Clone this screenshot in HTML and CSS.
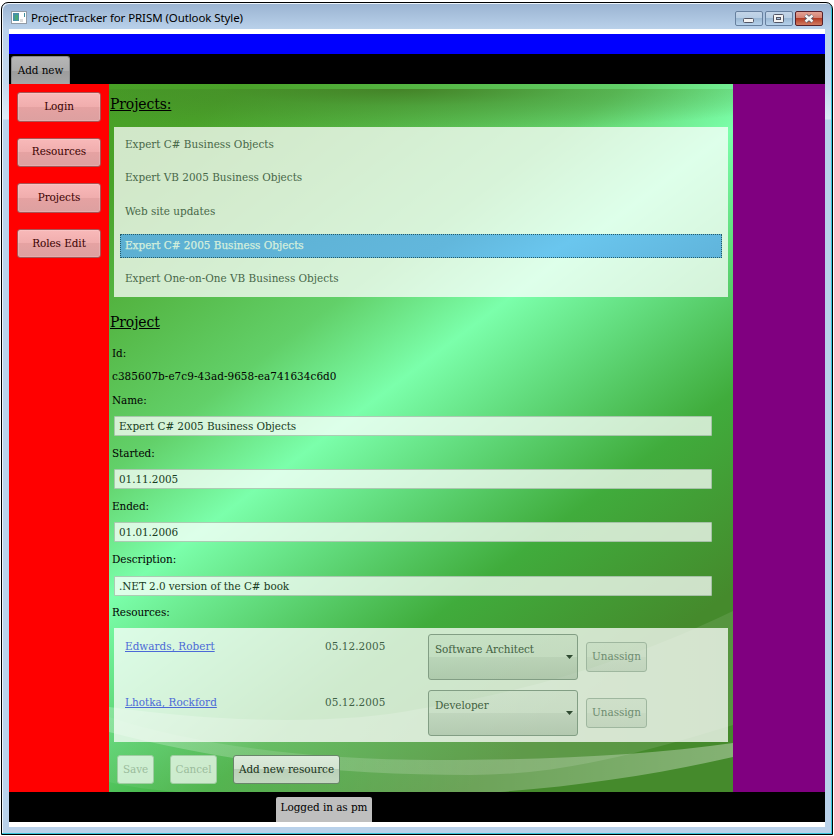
FILE: index.html
```html
<!DOCTYPE html>
<html lang="en">
<head>
<meta charset="utf-8">
<title>ProjectTracker for PRISM (Outlook Style)</title>
<link rel="stylesheet" href="styles.css">
</head>
<body>
<div class="window">
  <header class="titlebar">
    <svg class="app-icon" width="16" height="14" viewBox="0 0 16 14"><rect x=".5" y=".5" width="15" height="12" fill="#fff" stroke="#929ba6"/><rect x="2" y="2" width="6" height="8" fill="#4a91a7"/><rect x="4" y="4" width="3" height="5" fill="#48a978"/><rect x="9" y="8" width="3" height="3" fill="#ddd"/><rect x="13" y="2" width="1" height="4" fill="#3d8fa0"/></svg>
    <span class="caption">ProjectTracker for PRISM (Outlook Style)</span>
    <svg class="controls" width="88" height="15" viewBox="0 0 88 15">
      <defs>
        <linearGradient id="glass" x2="0" y2="1"><stop offset="0" stop-color="#c4d5e8"/><stop offset=".48" stop-color="#b7cde3"/><stop offset=".5" stop-color="#9bb8d4"/><stop offset="1" stop-color="#b8d3ec"/></linearGradient>
        <linearGradient id="danger" x2="0" y2="1"><stop offset="0" stop-color="#e5a598"/><stop offset=".48" stop-color="#d27f70"/><stop offset=".5" stop-color="#b43c25"/><stop offset="1" stop-color="#d38066"/></linearGradient>
      </defs>
      <rect x=".5" y=".5" width="27" height="14" rx="1.5" fill="url(#glass)" stroke="#67809f"/>
      <rect x="8.5" y="7.5" width="10" height="4" rx="1" fill="#f3f3f3" stroke="#535666"/>
      <rect x="30.500" y=".5" width="27" height="14" rx="1.5" fill="url(#glass)" stroke="#67809f"/>
      <rect x="38.500" y="3.500" width="10" height="8" rx="1" fill="#f3f3f3" stroke="#535666"/>
      <rect x="41.500" y="6.500" width="4" height="2" fill="#a9c3df" stroke="#535666"/>
      <rect x="60.500" y=".5" width="27" height="14" rx="1.500" fill="url(#danger)" stroke="#56202a"/>
      <path d="M70.500 4.500l7 6M77.500 4.500l-7 6" stroke="#535666" stroke-width="4.200"/>
      <path d="M70.500 4.500l7 6M77.500 4.500l-7 6" stroke="#f6f6f6" stroke-width="2.400"/>
    </svg>
  </header>
  <div class="client">
    <div class="banner"></div>
    <nav class="toolbar"><button class="tab">Add new</button></nav>
    <div class="workspace">
      <aside class="menu">
        <button class="menu-btn">Login</button>
        <button class="menu-btn">Resources</button>
        <button class="menu-btn">Projects</button>
        <button class="menu-btn">Roles Edit</button>
      </aside>
      <main class="view">
        <svg class="waves" width="624" height="708" viewBox="0 0 624 708">
          <defs>
            <linearGradient id="wa"><stop offset="0" stop-color="#fff" stop-opacity=".24"/><stop offset="1" stop-color="#fff" stop-opacity=".09"/></linearGradient>
            <linearGradient id="wb"><stop offset="0" stop-color="#fff" stop-opacity=".06"/><stop offset=".5" stop-color="#fff" stop-opacity=".19"/><stop offset="1" stop-color="#fff" stop-opacity=".34"/></linearGradient>
          </defs>
          <path fill="url(#wa)" d="M0 623C130 641 240 639 310 625C430 606 530 572 624 527V641C520 673 445 691 361 691C250 691 130 682 0 648Z"/>
          <path fill="url(#wb)" d="M0 633C80 660 200 676 325 676C440 676 540 671 624 659V673C550 690 470 702 391 708H68C45 706 20 703 0 698Z"/>
        </svg>
        <div class="content">
          <h2 class="heading list-heading">Projects:</h2>
          <ul class="project-list">
            <li>Expert C# Business Objects</li>
            <li>Expert VB 2005 Business Objects</li>
            <li>Web site updates</li>
            <li class="selected">Expert C# 2005 Business Objects</li>
            <li>Expert One-on-One VB Business Objects</li>
          </ul>
          <h2 class="heading detail-heading">Project</h2>
          <div class="label">Id:</div>
          <div class="label guid">c385607b-e7c9-43ad-9658-ea741634c6d0</div>
          <div class="label">Name:</div>
          <div class="field">Expert C# 2005 Business Objects</div>
          <div class="label">Started:</div>
          <div class="field">01.11.2005</div>
          <div class="label">Ended:</div>
          <div class="field">01.01.2006</div>
          <div class="label">Description:</div>
          <div class="field">.NET 2.0 version of the C# book</div>
          <div class="label">Resources:</div>
          <div class="resources">
            <div class="resource">
              <a class="person">Edwards, Robert</a><span class="date">05.12.2005</span>
              <div class="combo"><span>Software Architect</span><svg width="7" height="4" viewBox="0 0 7 4"><path d="M0 0h7L3.500 4z" fill="#2f4a31"/></svg></div>
              <button class="unassign">Unassign</button>
            </div>
            <div class="resource">
              <a class="person">Lhotka, Rockford</a><span class="date">05.12.2005</span>
              <div class="combo"><span>Developer</span><svg width="7" height="4" viewBox="0 0 7 4"><path d="M0 0h7L3.500 4z" fill="#2f4a31"/></svg></div>
              <button class="unassign">Unassign</button>
            </div>
          </div>
          <div class="actions">
            <button class="action save" disabled>Save</button>
            <button class="action cancel" disabled>Cancel</button>
            <button class="action add">Add new resource</button>
          </div>
        </div>
      </main>
      <aside class="side"></aside>
    </div>
    <footer class="status"><span class="status-tab">Logged in as pm</span></footer>
  </div>
</div>
</body>
</html>
```
FILE: styles.css
```css
* { box-sizing: border-box; }
body {
  margin: 0; width: 834px; height: 836px; overflow: hidden; background: #fff;
  padding: 2px 1px 1px 1px;
  font: 11.600px/16px "DejaVu Serif Condensed", "DejaVu Serif", serif;
  font-stretch: condensed; letter-spacing: -.05px; color: #000;
}
button { font: inherit; font-stretch: inherit; letter-spacing: inherit; color: inherit; margin: 0; padding: 0 0 2px; white-space: nowrap; }
.window {
  height: 833px; width: 832px; border: 1px solid #000; border-radius: 7px 7px 0 0;
  padding: 0 6px 5px 7px;
  background: linear-gradient(#9ab3d1, #b9d1ea 26px, #c3d8ee 80px, #dce9f6 116px, #b9d1ea 117px);
  box-shadow: inset -1px -1px #35c5dc, inset 1px 1px #eef5fb;
}
.titlebar { height: 26px; display: flex; align-items: center; padding: 4px 3px 0 2px; }
.app-icon { margin-top: 0; }
.caption { margin-left: 4px; font: 11.500px/16px "Noto Sans", sans-serif; letter-spacing: -.09px; white-space: nowrap; }
.controls { margin-left: auto; }
.client { width: 816px; height: 798px; background: #fff; padding: 5px 0; }
.banner { height: 20px; background: #00f; }
.toolbar { height: 30px; background: #000; padding: 2px; }
.tab { display: block; width: 59px; height: 28px; border: 1px solid #8a8a8a; border-bottom: 0; border-radius: 3px 3px 0 0; background: linear-gradient(#b6b6b6, #ababab 50%, #9c9c9c 50%, #a5a5a5); }
.workspace { display: flex; height: 708px; }
.menu { width: 100px; background: #f00; padding: 8px; display: flex; flex-direction: column; gap: 16px; }
.menu-btn { width: 84px; height: 29.600px; border: 1px solid #a95555; border-radius: 3px; color: #3a0000; background: linear-gradient(#f8b9b9, #f0adad 50%, #e5a2a2 50%, #dda0a0); box-shadow: inset 0 0 0 1px rgba(255,255,255,.15); }
.side { flex: 1; background: #800080; }
.view { width: 624px; display: grid; overflow: hidden; background: linear-gradient(143deg, #48a026 0, #4aa229 80px, #55b745 193px, #62d069 311px, #7bffab 412px, #5dd574 518px, #40ac3c 622px, #458a2c 780px); }
.waves, .content { grid-area: 1 / 1; }
.content {
  margin-top: 5px; padding-top: 5px; height: 703px; z-index: 1;
  background: radial-gradient(ellipse 440px 42px at 290px 0, rgba(62,112,30,.72), rgba(66,128,40,.42) 40%, rgba(74,155,55,0)) no-repeat;
}
.heading { margin: 0; font-size: 15.500px; line-height: 20px; font-weight: 400; text-decoration: underline; padding-left: 1px; letter-spacing: -.1px; }
.project-list { list-style: none; margin: 12.500px 5px 0; padding: 6px; height: 170px; background: rgba(255,255,255,.75); color: #476748; }
.project-list li { height: 24px; line-height: 21px; padding-left: 4px; border: 1px solid transparent; margin-bottom: 9.700px; letter-spacing: 0; }
.project-list .selected { background: linear-gradient(150deg, #5cafd1, #62b7dc 170px, #6ac6ee 230px, #60b4db); border: 1px dotted #255c68; color: #d5efdc; -webkit-text-stroke: .25px #d5efdc; }
.detail-heading { margin: 15px 0 9px; }
.label { height: 24px; line-height: 24px; padding-left: 3px; }
.label:nth-of-type(1) { height: 23px; }
.guid { letter-spacing: .06px; }
.field { width: 598px; height: 20px; margin: 4.500px 0 4.700px 5px; line-height: 18px; padding-left: 4px; border: 1px solid rgba(140,170,145,.6); background: rgba(255,255,255,.74); border-radius: 1px; color: #173c22; }
.resources { margin: 4.200px 5px 0; padding: 6px 11px; height: 114px; background: rgba(255,255,255,.75); display: flex; flex-direction: column; gap: 10px; }
.resource { height: 46px; display: grid; grid-template-columns: 200px 103px 150px 61px; column-gap: 0; align-items: start; }
.person { color: #4b69d7; text-decoration: underline; padding-top: 4px; letter-spacing: .03px; }
.date { color: #3f6246; padding-top: 4px; letter-spacing: .07px; }
.combo { height: 46px; display: flex; align-items: center; justify-content: space-between; padding: 0 4px 0 6px; border: 1px solid #829e84; border-radius: 3px; color: #41603f; background: linear-gradient(rgba(120,160,120,.1), rgba(120,160,120,.14) 50%, rgba(110,145,110,.22) 50%, rgba(105,140,105,.32)); }
.combo span { align-self: flex-start; padding-top: 6px; }
.unassign { width: 61px; height: 30px; margin: 8px 0 0 8px; border: 1px solid #9fb79f; border-radius: 3px; color: #6e8c70; background: linear-gradient(rgba(120,160,120,.08), rgba(120,160,120,.1) 50%, rgba(110,145,110,.14) 50%, rgba(105,140,105,.18)); }
.actions { display: flex; padding: 13px 0 0 8px; }
.action { height: 29px; border: 1px solid #a0cda2; border-radius: 3px; background: rgba(255,255,255,.7); color: #9bbc9c; }
.save { width: 37px; }
.cancel { width: 47px; margin-left: 16px; }
.add { width: 107px; margin-left: 16px; border-color: #69856a; color: #173018; background: linear-gradient(#dcebdb, #d3e4d1 50%, #bad0b8 50%, #c3d8c1); }
.status { height: 30px; background: #000; padding: 5px 0 0 267px; }
.status-tab { display: block; width: 96px; height: 25px; line-height: 20px; text-align: center; background: #bfbfbf; border-radius: 2px 2px 0 0; white-space: nowrap; }
```
